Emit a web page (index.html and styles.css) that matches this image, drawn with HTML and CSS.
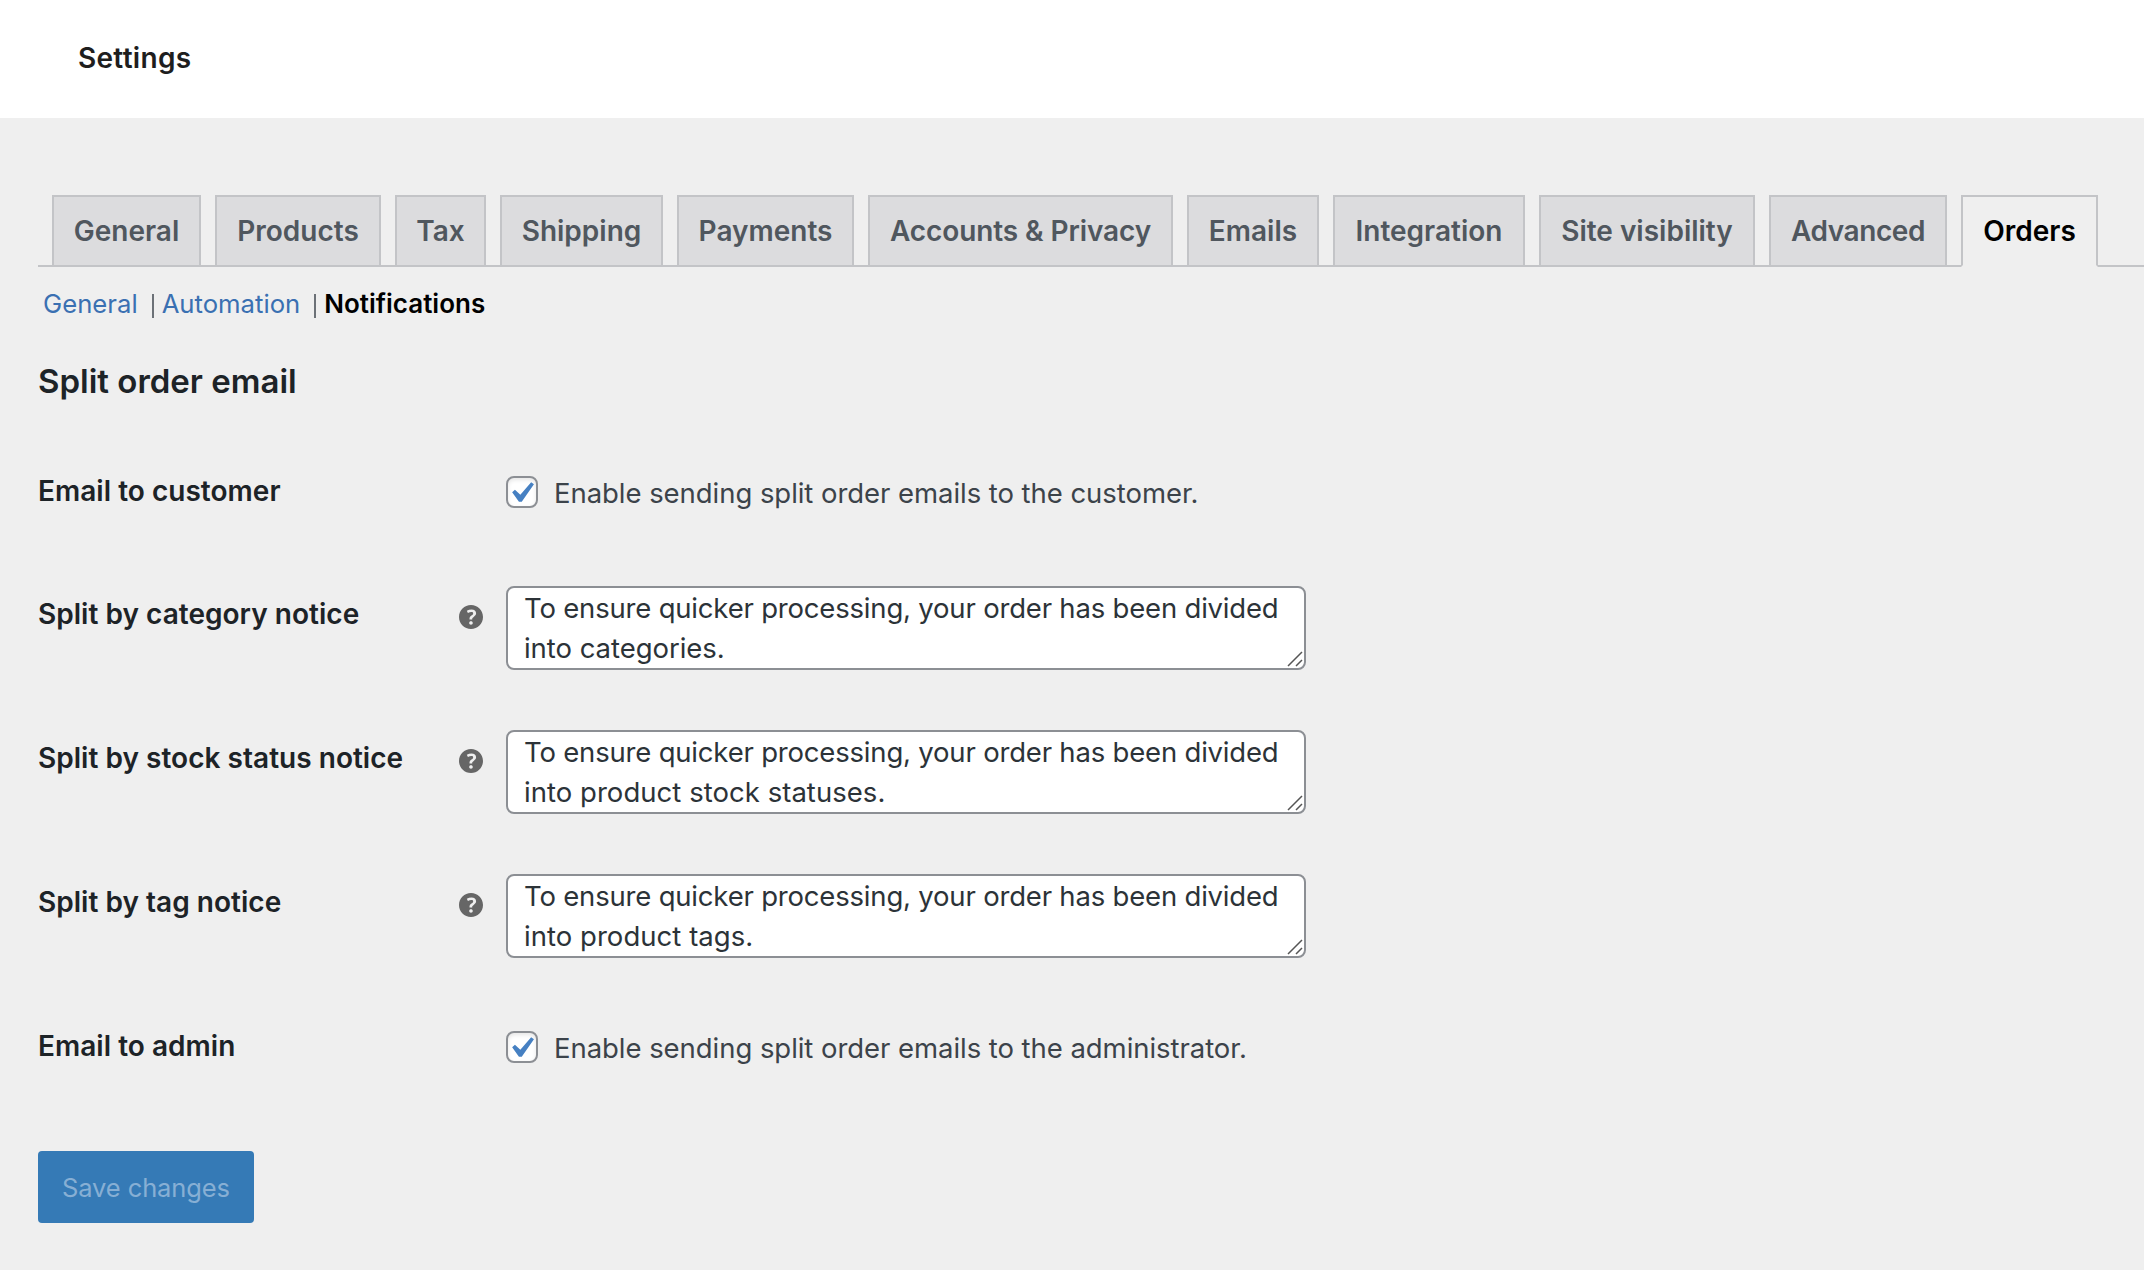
FILE: index.html
```html
<!DOCTYPE html>
<html lang="en">
<head>
<meta charset="utf-8">
<title>Settings</title>
<link rel="stylesheet" href="styles.css">
</head>
<body>
<svg class="sprite" width="0" height="0" aria-hidden="true">
  <symbol id="help" viewBox="3 3 14 14"><path d="M17 10c0-3.87-3.14-7-7-7-3.87 0-7 3.13-7 7s3.13 7 7 7c3.86 0 7-3.13 7-7zm-6.3 1.48H9.14v-.43c0-.38.08-.7.24-.98s.46-.57.88-.89c.41-.29.68-.53.81-.71.14-.18.2-.39.2-.62 0-.25-.09-.44-.28-.58-.19-.13-.45-.19-.79-.19-.58 0-1.25.19-2 .57l-.64-1.28c.87-.49 1.8-.74 2.77-.74.81 0 1.45.2 1.92.58.48.39.71.91.71 1.55 0 .43-.09.8-.29 1.11-.19.32-.57.67-1.11 1.06-.38.28-.61.49-.71.63-.1.15-.15.34-.15.57v.35zm-1.47 2.74c-.18-.17-.27-.42-.27-.73 0-.33.08-.58.26-.75s.43-.25.77-.25c.32 0 .57.09.75.26s.27.42.27.74c0 .3-.09.55-.27.72-.18.18-.43.27-.75.27-.33 0-.58-.09-.76-.26z"/></symbol>
  <symbol id="check" viewBox="0 0 20 20"><path d="M14.83 4.89l1.34.94-5.81 8.38H9.02L5.78 9.67l1.34-1.25 2.57 2.4z"/></symbol>
  <symbol id="grip" viewBox="0 0 16 16"><path d="M1 15L15 1M9 15l6-6"/></symbol>
</svg>
<header class="header"><h1>Settings</h1></header>
<main class="page">
  <nav class="tabs">
    <a class="tab">General</a>
    <a class="tab">Products</a>
    <a class="tab">Tax</a>
    <a class="tab">Shipping</a>
    <a class="tab">Payments</a>
    <a class="tab tab-accounts">Accounts &amp; Privacy</a>
    <a class="tab">Emails</a>
    <a class="tab">Integration</a>
    <a class="tab">Site visibility</a>
    <a class="tab tab-advanced">Advanced</a>
    <a class="tab active">Orders</a>
  </nav>
  <ul class="subnav">
    <li><a>General</a></li>
    <li><a>Automation</a></li>
    <li><a class="current">Notifications</a></li>
  </ul>
  <h2>Split order email</h2>
  <form>
    <div class="row row-first">
      <div class="label">Email to customer</div>
      <label class="option"><span class="checkbox"><svg><use href="#check"/></svg></span>Enable sending split order emails to the customer.</label>
    </div>
    <div class="row">
      <div class="label">Split by category notice<svg class="help"><use href="#help"/></svg></div>
      <div class="textarea"><span class="line tight">To ensure quicker processing, your order has been divided</span><span class="line">into categories.</span><svg class="grip"><use href="#grip"/></svg></div>
    </div>
    <div class="row">
      <div class="label">Split by stock status notice<svg class="help"><use href="#help"/></svg></div>
      <div class="textarea"><span class="line tight">To ensure quicker processing, your order has been divided</span><span class="line loose">into product stock statuses.</span><svg class="grip"><use href="#grip"/></svg></div>
    </div>
    <div class="row">
      <div class="label">Split by tag notice<svg class="help"><use href="#help"/></svg></div>
      <div class="textarea"><span class="line tight">To ensure quicker processing, your order has been divided</span><span class="line loose">into product tags.</span><svg class="grip"><use href="#grip"/></svg></div>
    </div>
    <div class="row">
      <div class="label">Email to admin</div>
      <label class="option"><span class="checkbox"><svg><use href="#check"/></svg></span>Enable sending split order emails to the administrator.</label>
    </div>
    <button class="save" type="button" disabled>Save changes</button>
  </form>
</main>
</body>
</html>
```
FILE: styles.css
```css
* { box-sizing: border-box; }

body {
  margin: 0;
  height: 1270px;
  overflow: hidden;
  background: #efefef;
  color: #1d2327;
  font-family: Inter, "Liberation Sans", sans-serif;
  font-size: 28px;
  line-height: 36px;
}

.sprite { display: block; }

.header {
  height: 118px;
  padding: 40px 78px 0;
  background: #fff;
}

h1 {
  margin: 0;
  color: #1e1e1e;
  font-size: 28px;
  font-weight: 600;
  letter-spacing: .3px;
}

.page { padding: 77px 0 0 38px; }

.tabs {
  display: grid;
  grid-template-columns: 149px 166px 91px 163px 177px 305px 132px 192px 216px 178px 137px;
  gap: 14px;
  height: 72px;
  padding-left: 14px;
  border-bottom: 2px solid #c3c4c7;
}

.tab {
  height: 70px;
  border: 2px solid #c3c4c7;
  border-bottom: 0;
  background: #dcdcde;
  color: #50575e;
  font-weight: 600;
  line-height: 68px;
  text-align: center;
  white-space: nowrap;
}

.tab-accounts { letter-spacing: -.1px; }
.tab-advanced { letter-spacing: -.4px; }

.tab.active {
  height: 72px;
  border-bottom: 2px solid #efefef;
  background: #efefef;
  color: #000;
}

.subnav {
  display: flex;
  margin: 19px 0 0;
  padding: 0 0 0 5px;
  list-style: none;
  font-size: 25.7px;
}

.subnav li { display: flex; }
.subnav a { color: #3a70b2; }

.subnav li + li::before {
  content: "";
  width: 2px;
  height: 24px;
  margin: 8px 8px 0 14px;
  background: #6c7177;
}

.subnav .current {
  color: #000;
  font-size: 26px;
  font-weight: 600;
}

h2 {
  margin: 39px 0 52px;
  font-size: 33px;
  font-weight: 600;
  line-height: 40px;
}

.row {
  display: grid;
  grid-template-columns: 468px 800px;
  height: 144px;
}

.row-first { height: 123px; }

.label {
  display: flex;
  justify-content: space-between;
  padding: 20px 23px 0 0;
  font-weight: 600;
  letter-spacing: .03px;
  white-space: nowrap;
}

.help {
  width: 24px;
  height: 24px;
  margin-top: 9px;
  fill: #666;
}

.option {
  display: flex;
  gap: 16px;
  padding-top: 22px;
  color: #3c434a;
  font-size: 27.5px;
  letter-spacing: -.05px;
  white-space: nowrap;
}

.checkbox {
  width: 32px;
  height: 32px;
  margin-top: 1px;
  border: 2px solid #8c8f94;
  border-radius: 8px;
  background: #fff;
  box-shadow: inset 0 2px 4px rgba(0, 0, 0, .1);
}

.checkbox svg {
  display: block;
  width: 42px;
  height: 42px;
  margin: -6px 0 0 -8px;
  fill: #4680c2;
}

.textarea {
  position: relative;
  height: 84px;
  margin-top: 10px;
  padding-left: 16px;
  border: 2px solid #8c8f94;
  border-radius: 8px;
  background: #fff;
  color: #2c3338;
  font-size: 27.5px;
  line-height: 40px;
  white-space: nowrap;
}

.line {
  display: block;
  letter-spacing: -.04px;
}

.tight { letter-spacing: -.19px; }
.loose { letter-spacing: .04px; }

.grip {
  position: absolute;
  right: 1px;
  bottom: 1px;
  width: 16px;
  height: 16px;
  fill: none;
  stroke: #555;
  stroke-width: 1.5;
}

.save {
  display: block;
  width: 216px;
  height: 72px;
  margin-top: -1px;
  padding: 2px 0 0;
  border: 0;
  border-radius: 4px;
  background: #357ab6;
  color: #87afd4;
  font: 25.5px/70px Inter, "Liberation Sans", sans-serif;
  letter-spacing: -.1px;
}
```
